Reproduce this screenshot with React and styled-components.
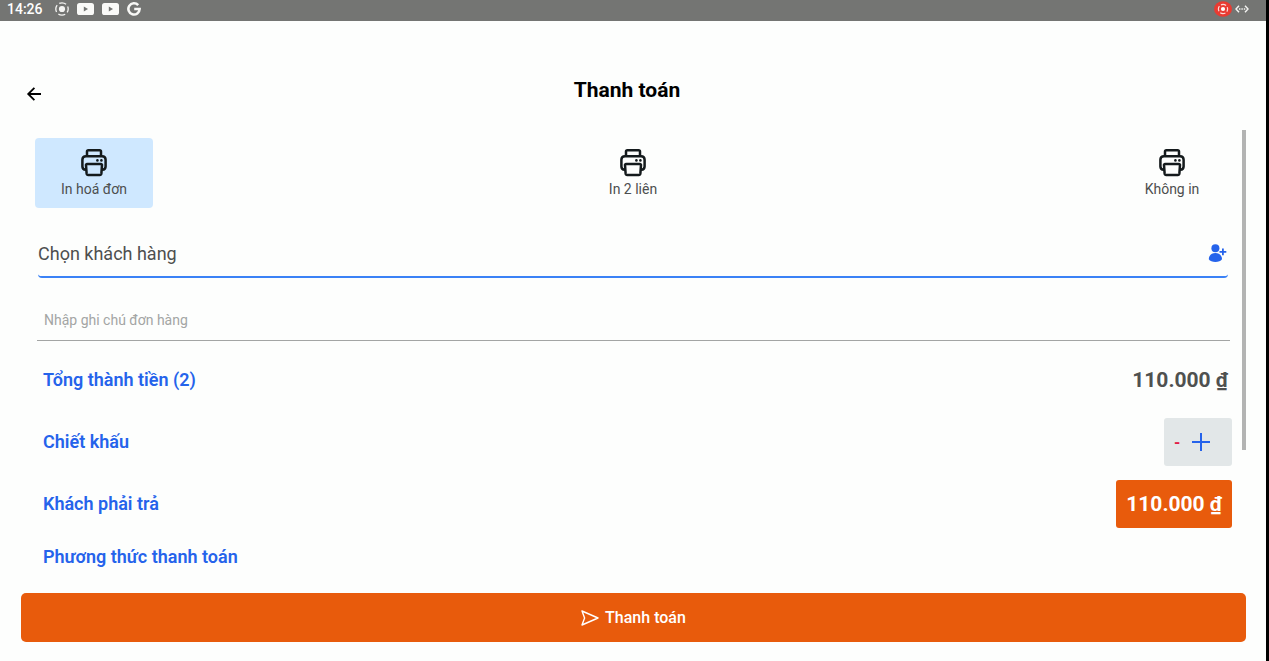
import React, { useState } from "react";
import styled, { createGlobalStyle } from "styled-components";

const PRINT_OPTIONS = ["In hoá đơn", "In 2 liên", "Không in"];

const PrinterIcon = () => (
    <svg width="26" height="28" viewBox="0 0 26 28" fill="none" stroke="#141a1c" strokeWidth="2.5" strokeLinejoin="round">
        <path d="M6 7V2.6Q6 1.3 7.4 1.3H18.6Q20 1.3 20 2.6V7" />
        <path d="M5.5 20.8H4.8Q1.4 20.4 1.4 17.4V10.8Q1.4 7.2 5 7.2H21Q24.6 7.2 24.6 10.8V17.4Q24.6 20.4 21.2 20.8H20.5" />
        <path d="M5 15.8Q5.4 15 6.4 15H19.6Q20.6 15 21 15.8L20.4 24.4Q20.2 26 18.8 26H7.2Q5.8 26 5.6 24.4Z" />
        <g fill="#141a1c" stroke="none">
            <circle cx="16.4" cy="11.4" r="1.3" />
            <circle cx="20.4" cy="11.4" r="1.3" />
        </g>
    </svg>
);

const RecordIcon = () => (
    <svg width="14" height="14" viewBox="0 0 14 14" fill="none" stroke="#f4f4f2" strokeWidth="1.3">
        <circle cx="7" cy="7" r="6.2" strokeDasharray="7.2 2.54" strokeDashoffset="3.6" />
        <circle cx="7" cy="7" r="3.1" fill="#f4f4f2" stroke="none" />
    </svg>
);

const VideoIcon = () => (
    <svg width="17" height="12" viewBox="0 0 17 12">
        <rect width="17" height="12" rx="2.6" fill="#fafaf8" />
        <path d="M6.8 3.6L11 6L6.8 8.4Z" fill="#747573" />
    </svg>
);

const SearchLogo = () => (
    <svg width="14" height="14" viewBox="0 0 14 14" fill="none" stroke="#f8f8f6" strokeWidth="2.6">
        <path d="M11.2 3.2A5.6 5.6 0 1 0 12.6 7H7.2" />
    </svg>
);

const CastIcon = () => (
    <svg width="18" height="16" viewBox="0 0 18 16" fill="none">
        <ellipse cx="9" cy="8" rx="9" ry="7.8" fill="#e93b32" />
        <circle cx="9" cy="8" r="4.6" stroke="#fbd9d6" strokeWidth="1.2" strokeDasharray="5.4 1.83" strokeDashoffset="2.7" />
        <circle cx="9" cy="8" r="2.1" fill="#fff" />
    </svg>
);

const LinkIcon = () => (
    <svg width="14" height="8" viewBox="0 0 14 8" fill="none" stroke="#f4f4f2" strokeWidth="1.4">
        <path d="M4 0.8L1 4L4 7.2M10 0.8L13 4L10 7.2" />
        <path d="M4 4H10.4" strokeDasharray="1.4 1" />
    </svg>
);

const BackIcon = () => (
    <svg width="16" height="16" viewBox="0 0 16 16" fill="none" stroke="#000" strokeWidth="1.8">
        <path d="M15 8H2.4M8.4 1.8L2.2 8L8.4 14.2" />
    </svg>
);

const AddPersonIcon = () => (
    <svg width="19" height="18" viewBox="0 0 19 18" fill="#2563eb">
        <circle cx="7.4" cy="4.2" r="4" />
        <path d="M0.8 15.2C0.8 11.6 3.4 9 7.4 9C11.4 9 14 11.6 14 15.2C12.8 17 10.4 17.9 7.4 17.9C4.4 17.9 2 17 0.8 15.2Z" />
        <path d="M14.9 4.4V11.2M11.5 7.8H18.3" stroke="#2563eb" strokeWidth="1.8" />
    </svg>
);

const PlusIcon = () => (
    <svg width="18" height="18" viewBox="0 0 18 18" stroke="#2563eb" strokeWidth="2">
        <path d="M9 0V18M0 9H18" />
    </svg>
);

const SendIcon = () => (
    <svg width="18" height="16" viewBox="0 0 18 16" fill="none" stroke="#fff" strokeWidth="1.4" strokeLinejoin="round">
        <path d="M1 1L17 8L1 15L3.6 8Z" />
    </svg>
);

const App = () => {
    const [printOption, setPrintOption] = useState(0);

    return (
        <>
            <GlobalStyle />
            <Screen>
                <StatusBar>
                    <Clock>14:26</Clock>
                    <RecordIcon />
                    <VideoIcon />
                    <VideoIcon />
                    <SearchLogo />
                    <StatusRight>
                        <CastIcon />
                        <LinkIcon />
                    </StatusRight>
                </StatusBar>

                <Header>
                    <BackButton type="button" aria-label="Quay lại">
                        <BackIcon />
                    </BackButton>
                    <Title>Thanh toán</Title>
                </Header>

                <Content>
                    <ScrollThumb />
                    <PrintOptions>
                        {PRINT_OPTIONS.map((label, idx) => (
                            <PrintButton
                                key={label}
                                type="button"
                                $active={idx === printOption}
                                onClick={() => setPrintOption(idx)}
                            >
                                <PrinterIcon />
                                {label}
                            </PrintButton>
                        ))}
                    </PrintOptions>

                    <CustomerField>
                        <CustomerInput placeholder="Chọn khách hàng" aria-label="Chọn khách hàng" />
                        <IconButton type="button" aria-label="Thêm khách hàng">
                            <AddPersonIcon />
                        </IconButton>
                    </CustomerField>

                    <NoteInput placeholder="Nhập ghi chú đơn hàng" aria-label="Nhập ghi chú đơn hàng" />

                    <Summary>
                        <Row>
                            <Label>Tổng thành tiền (2)</Label>
                            <Total>110.000 ₫</Total>
                        </Row>
                        <Row>
                            <Label>Chiết khấu</Label>
                            <DiscountButton type="button" aria-label="Thêm chiết khấu">
                                <Minus>-</Minus>
                                <PlusIcon />
                            </DiscountButton>
                        </Row>
                        <Row>
                            <Label>Khách phải trả</Label>
                            <AmountButton type="button">110.000 ₫</AmountButton>
                        </Row>
                        <Label>Phương thức thanh toán</Label>
                    </Summary>
                </Content>

                <Footer>
                    <PayButton type="button">
                        <SendIcon />
                        Thanh toán
                    </PayButton>
                </Footer>
            </Screen>
        </>
    );
};

const GlobalStyle = createGlobalStyle`
    * {
        box-sizing: border-box;
    }
    body {
        margin: 0;
        background: #fdfefd;
        font-family: Roboto, "Noto Sans", sans-serif;
    }
    button, input {
        font-family: inherit;
        border: 0;
        padding: 0;
        background: none;
    }
    button {
        cursor: pointer;
    }
    svg {
        display: block;
        flex-shrink: 0;
    }
`;

const Screen = styled.div`
    display: flex;
    flex-direction: column;
    min-height: 100vh;
    border-right: 3px solid #000;
`;

const StatusBar = styled.div`
    display: flex;
    align-items: center;
    gap: 8px;
    height: 21px;
    padding: 0 17px 3px 7px;
    background: #747573;
`;

const Clock = styled.span`
    margin-right: 4px;
    font-size: 14px;
    font-weight: 500;
    line-height: 18px;
    color: #fff;
`;

const StatusRight = styled.div`
    display: flex;
    align-items: center;
    gap: 3px;
    margin-left: auto;
`;

const Header = styled.header`
    display: flex;
    align-items: center;
    height: 109px;
    padding: 36px 38px 8px 26px;
`;

const BackButton = styled.button`
    display: flex;
    width: 20px;
    padding-top: 8px;
`;

const Title = styled.h1`
    flex: 1;
    margin: 0;
    padding-right: 20px;
    font-size: 21px;
    font-weight: 700;
    line-height: 28px;
    text-align: center;
    color: #000;
`;

const Content = styled.main`
    position: relative;
    flex: 1;
    margin: 0 20px;
    padding: 8px 14px 0 15px;
`;

const ScrollThumb = styled.div`
    position: absolute;
    top: 0;
    right: 0;
    width: 4px;
    height: 320px;
    background: #b3b4b3;
`;

const PrintOptions = styled.div`
    display: flex;
    justify-content: space-between;
    padding-right: 1px;
`;

const PrintButton = styled.button`
    display: flex;
    flex-direction: column;
    align-items: center;
    gap: 4px;
    width: 118px;
    height: 70px;
    padding-top: 11px;
    border-radius: 4px;
    background: ${({ $active }) => ($active ? "#cfe8ff" : "transparent")};
    font-size: 14px;
    line-height: 16px;
    color: #4d4f4f;
`;

const CustomerField = styled.div`
    display: flex;
    align-items: center;
    height: 48px;
    margin: 22px 4px 0 3px;
    border-bottom: 2px solid #3b82f6;
    border-radius: 4px;
`;

const CustomerInput = styled.input`
    flex: 1;
    height: 24px;
    font-size: 18px;
    color: #4d4f4f;
    outline: none;

    &::placeholder {
        color: #4d4f4f;
        opacity: 1;
    }
`;

const IconButton = styled.button`
    display: flex;
    padding-right: 1px;
`;

const NoteInput = styled.input`
    display: block;
    width: calc(100% - 4px);
    height: 42px;
    margin: 21px 2px 0;
    padding: 0 7px;
    border-bottom: 1px solid #a3a5a4;
    font-size: 14px;
    outline: none;

    &::placeholder {
        color: #a3a5a4;
        opacity: 1;
    }
`;

const Summary = styled.section`
    display: flex;
    flex-direction: column;
    gap: 14px;
    padding-top: 15px;
`;

const Row = styled.div`
    display: flex;
    align-items: center;
    justify-content: space-between;
    height: 48px;
`;

const Label = styled.span`
    padding-left: 8px;
    font-size: 18px;
    font-weight: 600;
    line-height: 30px;
    color: #2563eb;
`;

const Total = styled.span`
    padding-right: 4px;
    font-size: 21px;
    font-weight: 700;
    color: #4f5150;
`;

const DiscountButton = styled.button`
    display: flex;
    align-items: center;
    gap: 12px;
    width: 68px;
    height: 48px;
    padding-left: 10px;
    border-radius: 3px;
    background: #e2e7e8;
`;

const Minus = styled.span`
    font-size: 16px;
    font-weight: 700;
    color: #e11d48;
`;

const AmountButton = styled.button`
    height: 48px;
    padding: 0 10px;
    border-radius: 3px;
    background: #e85b0c;
    font-size: 21px;
    font-weight: 700;
    color: #fff;
`;

const Footer = styled.footer`
    padding: 21px 20px 19px 21px;
`;

const PayButton = styled.button`
    display: flex;
    align-items: center;
    justify-content: center;
    gap: 6px;
    width: 100%;
    height: 49px;
    border-radius: 5px;
    background: #e85b0c;
    font-size: 16px;
    font-weight: 500;
    color: #fff;
`;

export default App;
